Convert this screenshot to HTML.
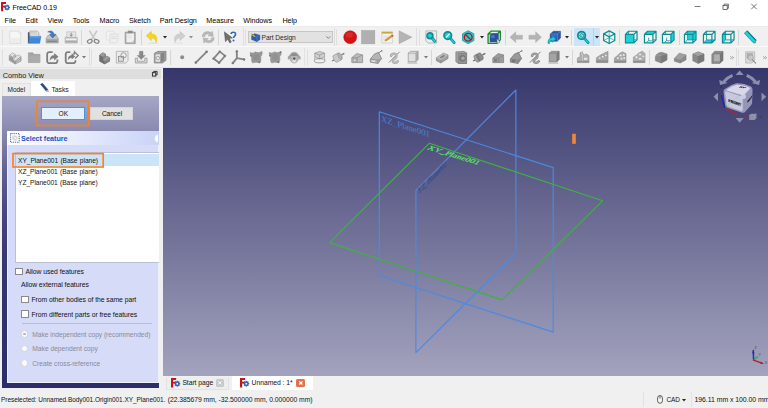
<!DOCTYPE html>
<html><head><meta charset="utf-8"><title>FreeCAD 0.19</title>
<style>
*{margin:0;padding:0;box-sizing:border-box}
html,body{width:768px;height:408px;overflow:hidden;background:#f0f0f0;font-family:"Liberation Sans",sans-serif;}
.a{position:absolute}
.t{position:absolute;white-space:nowrap;color:#111;font-size:7.2px;line-height:9px;letter-spacing:-0.05px}
.g{color:#8a8a96}
svg{position:absolute;overflow:visible}
</style></head><body>
<div class="a" style="left:0px;top:0px;width:768px;height:13px;background:#fff"></div>
<svg style="left:1.1px;top:2.15px" width="9.5" height="9.5" viewBox="0 0 19 19"><path d="M0 0h10v3.800H4.200v3.600h4.500v3.400H4.200v7.500H0z" fill="#c4141c"/><g fill="#3462b0"><circle cx="12.200" cy="11" r="4.400"/><rect x="10.900" y="5.300" width="2.600" height="11.400"/><rect x="6.500" y="9.700" width="11.400" height="2.600"/><rect x="10.900" y="5.300" width="2.600" height="11.400" transform="rotate(45 12.200 11)"/><rect x="10.900" y="5.300" width="2.600" height="11.400" transform="rotate(-45 12.200 11)"/></g><circle cx="12.200" cy="11" r="1.900" fill="#eef2fa"/></svg>
<div class="t" style="left:12.4px;top:2.8px;font-size:7.05px;color:#000">FreeCAD 0.19</div>
<svg style="left:0;top:0" width="768" height="13" viewBox="0 0 768 13"><g stroke="#2a2a2a" stroke-width="0.65" fill="none"><path d="M694.800 6.500h5.600"/><rect x="723" y="5.300" width="4.200" height="4.200"/><path d="M724.200 5.300v-1.200h4.200v4.200h-1.200"/><path d="M751.300 3.800l5.400 5.400M756.700 3.800l-5.400 5.400"/></g></svg>
<div class="a" style="left:0px;top:13px;width:768px;height:14px;background:#fff"></div>
<div class="t" style="left:4.6px;top:16.3px;font-size:7.2px;color:#000">File</div>
<div class="t" style="left:25.4px;top:16.3px;font-size:7.2px;color:#000">Edit</div>
<div class="t" style="left:47.6px;top:16.3px;font-size:7.2px;color:#000">View</div>
<div class="t" style="left:72.8px;top:16.3px;font-size:7.2px;color:#000">Tools</div>
<div class="t" style="left:99.6px;top:16.3px;font-size:7.2px;color:#000">Macro</div>
<div class="t" style="left:129px;top:16.3px;font-size:7.2px;color:#000">Sketch</div>
<div class="t" style="left:159.8px;top:16.3px;font-size:7.2px;color:#000">Part Design</div>
<div class="t" style="left:206.3px;top:16.3px;font-size:7.2px;color:#000">Measure</div>
<div class="t" style="left:243.2px;top:16.3px;font-size:7.2px;color:#000">Windows</div>
<div class="t" style="left:282.4px;top:16.3px;font-size:7.2px;color:#000">Help</div>
<div class="a" style="left:0px;top:25.8px;width:768px;height:42.2px;background:#f0f0f0"></div>
<div class="a" style="left:0px;top:25.6px;width:768px;height:0.6px;background:#ebebeb"></div>
<div class="a" style="left:0px;top:46.4px;width:768px;height:0.8px;background:#fafafa"></div>
<div class="a" style="left:0px;top:66.8px;width:768px;height:1.2px;background:#e4e4e4"></div>
<svg style="left:2.2px;top:29.5px" width="1" height="15" viewBox="0 0 1 15"><path d="M0.5 0v15" stroke="#b8b8b8" stroke-width="0.6" stroke-dasharray="0.8 0.8"/></svg>
<svg style="left:7.80px;top:29.80px" width="14.4" height="14.4" viewBox="0 0 16 16"><path d="M2 1.2h10.2L14 3v12H2z" fill="#f6f6f6" stroke="#d2d2d2" stroke-width=".7"/><path d="M12 1.2V3.2h2" fill="none" stroke="#d8d8d8" stroke-width=".6"/><path d="M3 9h10v5.4H3z" fill="#ececec"/></svg>
<svg style="left:26.50px;top:29.80px" width="14.4" height="14.4" viewBox="0 0 16 16"><path d="M3.200 1.300h8.300l1.700 1.700v6H3.200z" fill="#e6e6e6" stroke="#8c8c8c" stroke-width=".6"/><path d="M4 3h7M4 4.500h8" stroke="#b0b0b0" stroke-width=".6"/><path d="M1 2.500v12h1.800v-12z" fill="#4c5668"/><path d="M3 7h12.500l-1.400 7.800H1.400z" fill="#4088d8" stroke="#2c64a8" stroke-width=".5"/><path d="M3.400 7.700h11.500" stroke="#8cc4f4" stroke-width=".7"/></svg>
<svg style="left:45.30px;top:29.80px" width="14.4" height="14.4" viewBox="0 0 16 16"><path d="M1.2 9.5l2-3.5h9.6l2 3.5v5H1.2z" fill="#c4c4c4" stroke="#8c8c8c" stroke-width=".6"/><path d="M1.5 10h13v4.2h-13z" fill="#a6a6a6"/><path d="M2.5 12.6h11" stroke="#6e6e6e" stroke-width=".8"/><path d="M3 2.2c3-2 6.5-1 7 2.6h2.3L8.6 9 5 4.8h2.2C7 3 5 2 3 2.2z" fill="#3c7cc8" stroke="#24589c" stroke-width=".5"/></svg>
<svg style="left:63.60px;top:29.80px" width="14.4" height="14.4" viewBox="0 0 16 16"><path d="M3 2h10V8.500H3z" fill="#e6e6e6" stroke="#b0b0b0" stroke-width=".6"/><path d="M8 3v3.600M6.300 5.300L8 7l1.700-1.700" stroke="#8a8a8a" stroke-width="1.100" fill="none"/><path d="M1.200 8.200h13.600v6.300H1.200z" fill="#c8c8c8" stroke="#a0a0a0" stroke-width=".6"/><path d="M2 10.300h12" stroke="#f4f4f4" stroke-width="1.400"/><path d="M2 13h12" stroke="#9a9a9a" stroke-width=".9"/></svg>
<svg style="left:85.80px;top:29.80px" width="14.4" height="14.4" viewBox="0 0 16 16"><path d="M3.800 .8L9.800 10.500M12.200 .8L6.200 10.500" stroke="#c8c8c8" stroke-width="1.800" fill="none"/><ellipse cx="4.200" cy="12.600" rx="2.700" ry="2" fill="none" stroke="#848484" stroke-width="1.400" transform="rotate(-25 4.200 12.600)"/><ellipse cx="11.800" cy="12.600" rx="2.700" ry="2" fill="none" stroke="#848484" stroke-width="1.400" transform="rotate(25 11.800 12.600)"/></svg>
<svg style="left:104.80px;top:29.80px" width="14.4" height="14.4" viewBox="0 0 16 16"><path d="M1.500 1.500h8.500v9.500h-8.500z" fill="#f2f2f2" stroke="#dcdcdc" stroke-width=".7"/><path d="M5.500 4.500h9v7.500l-2.500 2.500h-6.500z" fill="#efefef" stroke="#d4d4d4" stroke-width=".7"/><path d="M7 7.500h6M7 9.500h6" stroke="#dadada" stroke-width=".9"/></svg>
<svg style="left:123.30px;top:29.80px" width="14.4" height="14.4" viewBox="0 0 16 16"><path d="M2.300 2.300h11.400v12.900H2.300z" fill="#acacac" stroke="#909090" stroke-width=".6"/><path d="M3.800 3.800h8.400v9.900H3.800z" fill="#f0f0f0"/><path d="M5.300 .8h5.400v2.800H5.300z" fill="#8e8e8e"/><path d="M5 6.500h5M5 8.500h5" stroke="#dcdcdc" stroke-width=".7"/><path d="M12.200 13.700h-2.700l2.700-2.700z" fill="#c4c4c4"/></svg>
<svg style="left:144.80px;top:29.80px" width="14.4" height="14.4" viewBox="0 0 16 16"><path d="M1.500 6.500L7 1.500v3c5 0 7.500 3.500 5.500 9.500-1-3.800-2.500-5-5.500-5v2.800z" fill="#f4d620" stroke="#e0b800" stroke-width=".5"/><ellipse cx="9" cy="14.600" rx="5" ry="1" fill="#dcdcdc" opacity=".7"/></svg>
<svg style="left:171.50px;top:29.80px" width="14.4" height="14.4" viewBox="0 0 16 16"><path d="M14.500 6.500L9 1.500v3c-5 0-7.500 3.500-5.500 9.500 1-3.800 2.500-5 5.500-5v2.800z" fill="#cfcfcf" stroke="#bdbdbd" stroke-width=".5"/><ellipse cx="7" cy="14.600" rx="5" ry="1" fill="#e4e4e4" opacity=".7"/></svg>
<svg style="left:200.50px;top:29.80px" width="14.4" height="14.4" viewBox="0 0 16 16"><path d="M1.300 7.500C1.300 3.500 4.500 1.500 8 1.800c1.300.1 2.300.5 3.200 1.100l1.600-1.700.9 6-6-.7 1.700-1.700C6.500 3.800 4.300 5 4.300 7.500z" fill="#b8b8b8" stroke="#a4a4a4" stroke-width=".4"/><path d="M14.700 8.500c0 4-3.200 6-6.700 5.700-1.300-.1-2.300-.5-3.200-1.100l-1.600 1.700-.9-6 6 .7-1.700 1.700c2.900 1 5.100-.2 5.100-2.700z" fill="#b8b8b8" stroke="#a4a4a4" stroke-width=".4"/></svg>
<svg style="left:222.80px;top:29.80px" width="14.4" height="14.4" viewBox="0 0 16 16"><path d="M1.500 2l1.200 11 2.600-2.600 2.200 4 1.800-1-2.200-4 3.400-.5z" fill="#707070" stroke="#4a4a4a" stroke-width=".5"/><path d="M9 4.500c0-2.500 5-2.800 5 .3 0 2-2.300 2-2.300 4.200" fill="none" stroke="#2c68b4" stroke-width="1.700"/><circle cx="11.700" cy="11.600" r="1.100" fill="#2c68b4"/></svg>
<svg style="left:342.60px;top:29.80px" width="14.4" height="14.4" viewBox="0 0 16 16"><circle cx="8" cy="8" r="7.200" fill="#d41414" stroke="#a80c0c" stroke-width=".5"/><ellipse cx="7" cy="5.500" rx="4" ry="3" fill="#e84040" opacity=".45"/></svg>
<svg style="left:360.80px;top:29.80px" width="14.4" height="14.4" viewBox="0 0 16 16"><rect x=".6" y=".6" width="14.800" height="14.800" fill="#b0b0b0" stroke="#9c9c9c" stroke-width=".5"/></svg>
<svg style="left:379.60px;top:29.80px" width="14.4" height="14.4" viewBox="0 0 16 16"><path d="M2 2h12v12.500H2z" fill="#f2f2ee" stroke="#c0c0b8" stroke-width=".6"/><path d="M2 2h12v2H2z" fill="#c8a838"/><path d="M3.500 7h6M3.500 9h4M3.500 11h3" stroke="#cfcfcf" stroke-width=".6"/><path d="M13.500 5.200l1.400 1.400-7 5-2.400.8 1-2.200z" fill="#e89a30" stroke="#a86410" stroke-width=".4"/><path d="M13.500 5.200l1.400 1.400-1.200.8-1.300-1.400z" fill="#d84848"/></svg>
<svg style="left:398.30px;top:29.80px" width="14.4" height="14.4" viewBox="0 0 16 16"><path d="M1.200 .8L15.500 8 1.200 15.200z" fill="#b4b4b4" stroke="#a2a2a2" stroke-width=".5"/></svg>
<svg style="left:423.80px;top:29.80px" width="14.4" height="14.4" viewBox="0 0 16 16"><path d="M2 1h12v13.500H4.500L2 12z" fill="#ececec" stroke="#8a8a8a" stroke-width=".6"/><path d="M8.5 8.3L12 12.5" stroke="#0c8c94" stroke-width="3.200" stroke-linecap="round"/><path d="M8.5 8.3L12 12.5" stroke="#1fd0d8" stroke-width="1.500" stroke-linecap="round"/><circle cx="6.6" cy="6.4" r="3.2" fill="#1fd0d8" stroke="#0c8c94" stroke-width="1.900"/></svg>
<svg style="left:442.30px;top:29.80px" width="14.4" height="14.4" viewBox="0 0 16 16"><path d="M8.9 8.7L13.5 14" stroke="#0c8c94" stroke-width="3.200" stroke-linecap="round"/><path d="M8.9 8.7L13.5 14" stroke="#1fd0d8" stroke-width="1.500" stroke-linecap="round"/><circle cx="6.4" cy="6.2" r="4.2" fill="#1fd0d8" stroke="#0c8c94" stroke-width="1.900"/><path d="M4.500 8.500L8.500 4" stroke="#e8f8f8" stroke-width="1.400"/></svg>
<svg style="left:460.80px;top:29.80px" width="14.4" height="14.4" viewBox="0 0 16 16"><path d="M8 .8l6.300 3.400v7.600L8 15.200 1.700 11.800V4.200z" fill="#1fd0d8" stroke="#0c8c94" stroke-width=".8"/><circle cx="8" cy="8" r="4.300" fill="none" stroke="#b81414" stroke-width="1.500"/><path d="M5 5l6 6" stroke="#b81414" stroke-width="1.500"/></svg>
<svg style="left:487.30px;top:29.80px" width="14.4" height="14.4" viewBox="0 0 16 16"><path d="M1.200 4.500L4.800 1.200h10v9.800l-3.600 3.800H1.200zM1.200 4.500h10.200v10.300M11.400 4.500l3.400-3.300" fill="#e8f0e8" stroke="#178c2e" stroke-width="1.500" stroke-linejoin="round"/><path d="M3 6.500L5.500 4h7.500v7L10.500 13.500H3z" fill="#28509c"/><ellipse cx="6.500" cy="7.500" rx="2.500" ry="2" fill="#5c8cd8" opacity=".6"/><path d="M10.800 9.800l3.700 4.200-1.900.2-.9 1.400z" fill="#f4f4f4" stroke="#555" stroke-width=".4"/></svg>
<svg style="left:509.30px;top:29.80px" width="14.4" height="14.4" viewBox="0 0 16 16"><path d="M1 8l6.500-6v3.800H15v4.400H7.500V14z" fill="#b4b4b4" stroke="#a4a4a4" stroke-width=".4"/></svg>
<svg style="left:527.80px;top:29.80px" width="14.4" height="14.4" viewBox="0 0 16 16"><path d="M15 8L8.500 2v3.800H1v4.400h7.500V14z" fill="#b4b4b4" stroke="#a4a4a4" stroke-width=".4"/></svg>
<svg style="left:546.80px;top:29.80px" width="14.4" height="14.4" viewBox="0 0 16 16"><path d="M3.500 4.500l3.500-3h8V9L11.500 12.500h-8z" fill="#2a58a8" stroke="#16387a" stroke-width=".5"/><path d="M3.500 4.500h8v8M11.500 4.500l3.500-3" fill="none" stroke="#6c9ce0" stroke-width=".7"/><path d="M4.500 5.500h6v3h-6z" fill="#4a7cd0" opacity=".5"/><path d="M1.200 15c-.6-4 1.200-6.200 4.600-6.200V6.600l4 3.500-4 3.500v-2c-1.900 0-3 1-3 3.400z" fill="#1fd0d8" stroke="#0c8c94" stroke-width=".7"/></svg>
<svg style="left:601.80px;top:29.80px" width="14.4" height="14.4" viewBox="0 0 16 16"><path d="M8 1l6.200 3.300v7.400L8 15 1.800 11.700V4.300z" fill="#f4fcfc" stroke="#0c8c94" stroke-width="1.400" stroke-linejoin="round"/><path d="M1.800 4.300L8 7.600l6.200-3.300M8 7.600V15" fill="none" stroke="#0c8c94" stroke-width="1.300"/><path d="M8 1v6M1.800 11.700L8 8.500l6.200 3.200" fill="none" stroke="#0c8c94" stroke-width=".7"/></svg>
<svg style="left:623.80px;top:29.80px" width="14.4" height="14.4" viewBox="0 0 16 16"><path d="M5.1 1.4V11.0H14.5M1.6 14.4L5.1 11.0" fill="none" stroke="#0c8c94" stroke-width=".9"/><path d="M1.6 4.8L11.0 4.8L11.0 14.4L1.6 14.4z" fill="#1fd0d8"/><path d="M1.6 4.8H11V14.4H1.6zM1.6 4.8L5.1 1.4H14.5V11.0L11 14.4M11 4.8L14.5 1.4" fill="none" stroke="#0c8c94" stroke-width="1.300" stroke-linejoin="round"/></svg>
<svg style="left:642.50px;top:29.80px" width="14.4" height="14.4" viewBox="0 0 16 16"><path d="M5.1 1.4V11.0H14.5M1.6 14.4L5.1 11.0" fill="none" stroke="#0c8c94" stroke-width=".9"/><path d="M1.6 4.8L11.0 4.8L11.0 14.4L1.6 14.4z" fill="#f4fcfc"/><path d="M1.6 4.8L11.0 4.8L14.5 1.4L5.1 1.4z" fill="#1fd0d8"/><path d="M1.6 4.8H11V14.4H1.6zM1.6 4.8L5.1 1.4H14.5V11.0L11 14.4M11 4.8L14.5 1.4" fill="none" stroke="#0c8c94" stroke-width="1.300" stroke-linejoin="round"/><path d="M6.300 12V8.500M6.300 12H9.800M6.300 12L4 13.500" fill="none" stroke="#0c8c94" stroke-width=".9" /></svg>
<svg style="left:661.30px;top:29.80px" width="14.4" height="14.4" viewBox="0 0 16 16"><path d="M5.1 1.4V11.0H14.5M1.6 14.4L5.1 11.0" fill="none" stroke="#0c8c94" stroke-width=".9"/><path d="M1.6 4.8L11.0 4.8L11.0 14.4L1.6 14.4z" fill="#f4fcfc"/><path d="M11.0 4.8L14.5 1.4L14.5 11.0L11.0 14.4z" fill="#1fd0d8"/><path d="M1.6 4.8H11V14.4H1.6zM1.6 4.8L5.1 1.4H14.5V11.0L11 14.4M11 4.8L14.5 1.4" fill="none" stroke="#0c8c94" stroke-width="1.300" stroke-linejoin="round"/><path d="M6.300 12V8.500M6.300 12H9.800M6.300 12L4 13.500" fill="none" stroke="#0c8c94" stroke-width=".9" /></svg>
<svg style="left:683.30px;top:29.80px" width="14.4" height="14.4" viewBox="0 0 16 16"><path d="M5.1 1.4L14.5 1.4L14.5 11.0L5.1 11.0z" fill="#1fd0d8"/><path d="M5.1 1.4V11.0H14.5M1.6 14.4L5.1 11.0" fill="none" stroke="#0c8c94" stroke-width=".9"/><path d="M1.6 4.8H11V14.4H1.6zM1.6 4.8L5.1 1.4H14.5V11.0L11 14.4M11 4.8L14.5 1.4" fill="none" stroke="#0c8c94" stroke-width="1.300" stroke-linejoin="round"/></svg>
<svg style="left:701.80px;top:29.80px" width="14.4" height="14.4" viewBox="0 0 16 16"><path d="M1.6 14.4L11.0 14.4L14.5 11.0L5.1 11.0z" fill="#1fd0d8"/><path d="M5.1 1.4V11.0H14.5M1.6 14.4L5.1 11.0" fill="none" stroke="#0c8c94" stroke-width=".9"/><path d="M1.6 4.8H11V14.4H1.6zM1.6 4.8L5.1 1.4H14.5V11.0L11 14.4M11 4.8L14.5 1.4" fill="none" stroke="#0c8c94" stroke-width="1.300" stroke-linejoin="round"/></svg>
<svg style="left:720.80px;top:29.80px" width="14.4" height="14.4" viewBox="0 0 16 16"><path d="M1.6 4.8L5.1 1.4L5.1 11.0L1.6 14.4z" fill="#1fd0d8"/><path d="M5.1 1.4V11.0H14.5M1.6 14.4L5.1 11.0" fill="none" stroke="#0c8c94" stroke-width=".9"/><path d="M1.6 4.8H11V14.4H1.6zM1.6 4.8L5.1 1.4H14.5V11.0L11 14.4M11 4.8L14.5 1.4" fill="none" stroke="#0c8c94" stroke-width="1.300" stroke-linejoin="round"/></svg>
<svg style="left:742.50px;top:29.80px" width="14.4" height="14.4" viewBox="0 0 16 16"><path d="M1.500 3.500L4.500 1l10 10.500-1 3-2-.3z" fill="#1fd0d8" stroke="#0c8c94" stroke-width=".8" stroke-linejoin="round"/><path d="M4.500 1l10 10.500" stroke="#0a7078" stroke-width="1.200"/></svg>
<div class="a" style="left:81.4px;top:29.5px;width:0.7px;height:15px;background:#d6d6d6"></div>
<div class="a" style="left:140.7px;top:29.5px;width:0.7px;height:15px;background:#d6d6d6"></div>
<div class="a" style="left:217.7px;top:29.5px;width:0.7px;height:15px;background:#d6d6d6"></div>
<div class="a" style="left:505.4px;top:29.5px;width:0.7px;height:15px;background:#d6d6d6"></div>
<div class="a" style="left:618.7px;top:29.5px;width:0.7px;height:15px;background:#d6d6d6"></div>
<div class="a" style="left:679.4000000000001px;top:29.5px;width:0.7px;height:15px;background:#d6d6d6"></div>
<div class="a" style="left:738.2px;top:29.5px;width:0.7px;height:15px;background:#d6d6d6"></div>
<svg style="left:163px;top:36.0px" width="4" height="2.4" viewBox="0 0 4 2.4"><path d="M0 0h4L2 2.4z" fill="#222"/></svg>
<svg style="left:188.5px;top:36.0px" width="4" height="2.4" viewBox="0 0 4 2.4"><path d="M0 0h4L2 2.4z" fill="#8c8c8c"/></svg>
<svg style="left:479.5px;top:36.0px" width="4" height="2.4" viewBox="0 0 4 2.4"><path d="M0 0h4L2 2.4z" fill="#222"/></svg>
<svg style="left:564.5px;top:36.0px" width="4" height="2.4" viewBox="0 0 4 2.4"><path d="M0 0h4L2 2.4z" fill="#222"/></svg>
<div class="a" style="left:242.6px;top:28px;width:0.7px;height:18px;background:#dedede"></div>
<svg style="left:244.5px;top:29.5px" width="1" height="15" viewBox="0 0 1 15"><path d="M0.5 0v15" stroke="#b8b8b8" stroke-width="0.6" stroke-dasharray="0.8 0.8"/></svg>
<div class="a" style="left:333.8px;top:28px;width:0.7px;height:18px;background:#dedede"></div>
<svg style="left:336.0px;top:29.5px" width="1" height="15" viewBox="0 0 1 15"><path d="M0.5 0v15" stroke="#b8b8b8" stroke-width="0.6" stroke-dasharray="0.8 0.8"/></svg>
<div class="a" style="left:416px;top:28px;width:0.7px;height:18px;background:#dedede"></div>
<svg style="left:418.5px;top:29.5px" width="1" height="15" viewBox="0 0 1 15"><path d="M0.5 0v15" stroke="#b8b8b8" stroke-width="0.6" stroke-dasharray="0.8 0.8"/></svg>
<div class="a" style="left:571.3000000000001px;top:29.5px;width:0.7px;height:15px;background:#d6d6d6"></div>
<div class="a" style="left:247.5px;top:30.5px;width:85.5px;height:12.6px;background:#e2e2e2;border:0.6px solid #c6c6c6"></div>
<svg style="left:250.5px;top:32.5px" width="9.5" height="9" viewBox="0 0 16 15"><path d="M1 4l5-3 9 2.500V11l-5 3.500L1 11z" fill="#2c5cac" stroke="#183c7c" stroke-width=".6"/><path d="M1 4l9 2.500V14.500M10 6.500l5-3" fill="none" stroke="#6c9ce0" stroke-width=".7"/><path d="M1.500 2l5 4" stroke="#e8c020" stroke-width="2"/><path d="M1 1.500l1.500 1.200" stroke="#403000" stroke-width="1.500"/></svg>
<div class="t" style="left:261.6px;top:32.9px;font-size:6.65px;color:#2a2a2a">Part Design</div>
<svg style="left:325.5px;top:35.6px" width="4.600" height="3" viewBox="0 0 4.600 3"><path d="M.3.400l2 2 2-2" fill="none" stroke="#444" stroke-width=".6"/></svg>
<div class="a" style="left:574px;top:27.9px;width:26.3px;height:18px;background:#cce4f7"></div>
<div class="a" style="left:592.6px;top:28px;width:0.5px;height:18px;background:#b4d4f0"></div>
<svg style="left:576.30px;top:29.80px" width="14.4" height="14.4" viewBox="0 0 16 16"><path d="M8.7 8.5L13.5 14" stroke="#0c8c94" stroke-width="3.200" stroke-linecap="round"/><path d="M8.7 8.5L13.5 14" stroke="#1fd0d8" stroke-width="1.500" stroke-linecap="round"/><circle cx="6.2" cy="6" r="4.2" fill="#7fd8dc" stroke="#0c8c94" stroke-width="1.900"/><path d="M4 6.500l2-2.500 3 1.500-1 3z" fill="none" stroke="#0c8c94" stroke-width=".8"/></svg>
<svg style="left:594.5px;top:36.0px" width="4" height="2.4" viewBox="0 0 4 2.4"><path d="M0 0h4L2 2.4z" fill="#222"/></svg>
<svg style="left:2.2px;top:49.8px" width="1" height="15" viewBox="0 0 1 15"><path d="M0.5 0v15" stroke="#b8b8b8" stroke-width="0.6" stroke-dasharray="0.8 0.8"/></svg>
<svg style="left:7.80px;top:50.10px" width="14.4" height="14.4" viewBox="0 0 16 16"><path d="M1.500 6L5 3.500 8 5v2.500l3-2 3.500 1.800v5L8 15.500 1.500 11.500z" fill="#c8c8c8" stroke="#808080" stroke-width=".7" stroke-linejoin="round"/><path d="M1.500 6L5 8v2.500L8 12.300V15.500L1.500 11.500z" fill="#a8a8a8"/><path d="M1.500 6L5 3.500 8 5 5 8zM5 10.500L8 8.500l3-3 3.500 1.800L8 12.300z" fill="#e0e0e0"/><path d="M1.500 6L5 8v2.500L8 12.300V15.500M5 8l3-3M8 12.300L14.500 7.300M5 10.500L8 8.500M1.500 8.500L5 10.500M8 14L14.500 9.500M1.500 10L8 14" fill="none" stroke="#808080" stroke-width=".6"/></svg>
<svg style="left:26.50px;top:50.10px" width="14.4" height="14.4" viewBox="0 0 16 16"><path d="M1.500 3h5l1.200 1.800h6.800V14h-13z" fill="#a4a4a4" stroke="#969696" stroke-width=".5"/><path d="M1.500 6h13v8h-13z" fill="#ababab"/></svg>
<svg style="left:45.30px;top:50.10px" width="14.4" height="14.4" viewBox="0 0 16 16"><path d="M8.500 2.300H4.800a2.400 2.400 0 0 0-2.400 2.400v7.600a2.400 2.400 0 0 0 2.400 2.400h6.600a2.400 2.400 0 0 0 2.400-2.400V10.500" fill="none" stroke="#7e7e7e" stroke-width="2"/><path d="M5.300 12.300c0-4.500 1.700-6.500 4.900-6.500V3.200l4.800 4.200-4.800 4.200V9.200C8 9.200 6.400 10 5.300 12.300z" fill="#7e7e7e"/></svg>
<svg style="left:63.60px;top:50.10px" width="14.4" height="14.4" viewBox="0 0 16 16"><path d="M7 2.300H4.300a2.400 2.400 0 0 0-2.400 2.400v7.600a2.400 2.400 0 0 0 2.400 2.400h6a2.400 2.400 0 0 0 2.400-2.400V11.500" fill="none" stroke="#7e7e7e" stroke-width="2"/><path d="M4.300 11.800c0-4.500 1.500-6 4.200-6V3.500l3.900 3.600-3.900 3.600V8.600C6.700 8.600 5.300 9.500 4.300 11.800z" fill="#7e7e7e"/><path d="M9.800 4.300h1.800V2l4.200 4.200-3.400 3.300" fill="none" stroke="#7e7e7e" stroke-width="1.400"/></svg>
<svg style="left:96.50px;top:50.10px" width="14.4" height="14.4" viewBox="0 0 16 16"><path d="M3 5.500L6.500 3 9.500 4.500V8L11.500 7 14 8.500v4L8.500 15.500 3 12.500z" fill="#848484" stroke="#585858" stroke-width=".6" stroke-linejoin="round"/><path d="M3 5.500L6.500 7.500v3.500L8.500 12.200V15.500L3 12.500z" fill="#6e6e6e"/><path d="M3 5.500L6.500 3 9.500 4.500 6.500 7.500zM6.500 11L9.500 8 11.500 7 14 8.500 8.500 12.200z" fill="#9c9c9c"/></svg>
<svg style="left:115.30px;top:50.10px" width="14.4" height="14.4" viewBox="0 0 16 16"><path d="M1.500 1.500h13v10.500l-2.500 2.500h-10.500z" fill="#ececec" stroke="#9a9a9a" stroke-width=".7"/><rect x="4" y="7" width="5.500" height="5.500" fill="#dcdcdc" stroke="#808080" stroke-width=".8"/><circle cx="9.500" cy="6" r="3" fill="none" stroke="#808080" stroke-width=".8"/></svg>
<svg style="left:133.80px;top:50.10px" width="14.4" height="14.4" viewBox="0 0 16 16"><path d="M1.500 9h2.500v3.500h8V9h2.500v5.500h-13z" fill="#d8d8d8" stroke="#8a8a8a" stroke-width=".7"/><path d="M6 1.500h4V6h2.500L8 10.500 3.500 6H6z" fill="#8a8a8a" stroke="#747474" stroke-width=".4"/></svg>
<svg style="left:152.80px;top:50.10px" width="14.4" height="14.4" viewBox="0 0 16 16"><path d="M1.500 3.500l4-2h9v10l-4 3h-9z" fill="#a0a0a0" stroke="#6e6e6e" stroke-width=".6"/><path d="M2.500 4.500h6v9h-6z" fill="#e4e4e4" stroke="#8a8a8a" stroke-width=".5"/><circle cx="5.500" cy="9" r="2" fill="none" stroke="#8a8a8a" stroke-width=".7"/><path d="M8.500 4.500l4-2.500v9.500l-4 2.500z" fill="#848484"/></svg>
<svg style="left:174.80px;top:50.10px" width="14.4" height="14.4" viewBox="0 0 16 16"><circle cx="8" cy="8" r="2.200" fill="#8c8c8c"/></svg>
<svg style="left:193.50px;top:50.10px" width="14.4" height="14.4" viewBox="0 0 16 16"><path d="M2 14L14 2" stroke="#868686" stroke-width="2.100" stroke-linecap="round"/><circle cx="2" cy="14" r="1.400" fill="#7c7c7c"/><circle cx="14" cy="2" r="1.400" fill="#7c7c7c"/></svg>
<svg style="left:212.30px;top:50.10px" width="14.4" height="14.4" viewBox="0 0 16 16"><path d="M8.700 1.800l5.800 4.700-6.600 7.700-6.200-4.700z" fill="none" stroke="#868686" stroke-width="2" stroke-linejoin="round"/><g fill="#7c7c7c"><circle cx="8.700" cy="1.800" r="1.300"/><circle cx="14.500" cy="6.500" r="1.300"/><circle cx="7.900" cy="14.200" r="1.300"/><circle cx="1.700" cy="9.500" r="1.300"/></g></svg>
<svg style="left:230.50px;top:50.10px" width="14.4" height="14.4" viewBox="0 0 16 16"><path d="M6.500 1.500V9M6.500 9L2 14.500M6.500 9l8 1.500" fill="none" stroke="#868686" stroke-width="2.100" stroke-linecap="round"/><g fill="#7c7c7c"><circle cx="6.500" cy="1.600" r="1.400"/><circle cx="2" cy="14.500" r="1.400"/><circle cx="14.500" cy="10.500" r="1.400"/></g></svg>
<svg style="left:249.30px;top:50.10px" width="14.4" height="14.4" viewBox="0 0 16 16"><path d="M1.500 2.500C3.500 4 5.500 3.500 7 2c2.500 1.500 5 1 7.500-.5.500 2.500 0 4.500-1.500 6 .500 2.500.500 5-1 7-2.500-1-5.500-1-8 0-1.500-2.500-1.500-4.500-1-6.500C1.500 6.500 1 4.500 1.500 2.500z" fill="#989898" stroke="#868686" stroke-width=".5"/><ellipse cx="8" cy="8" rx="3.500" ry="3.500" fill="#888" opacity=".55"/><circle cx="2.300" cy="6.500" r=".9" fill="#6e6e6e"/><circle cx="11.500" cy="13.500" r=".9" fill="#6e6e6e"/></svg>
<svg style="left:267.80px;top:50.10px" width="14.4" height="14.4" viewBox="0 0 16 16"><path d="M1.500 2.500C3.500 4 5.500 3.500 7 2c2.500 1.500 5 1 7.500-.5.500 2.500 0 4.500-1.500 6 .500 2.500.500 5-1 7-2.500-1-5.500-1-8 0-1.500-2.500-1.500-4.500-1-6.500C1.500 6.500 1 4.500 1.500 2.500z" fill="#9a9a9a" stroke="#868686" stroke-width=".5"/><ellipse cx="8" cy="8" rx="3.500" ry="3.500" fill="#8a8a8a" opacity=".55"/><circle cx="2.300" cy="6.500" r=".9" fill="#6e6e6e"/><circle cx="14" cy="2.500" r=".9" fill="#6e6e6e"/><circle cx="11.500" cy="13.500" r=".9" fill="#6e6e6e"/></svg>
<svg style="left:286.80px;top:50.10px" width="14.4" height="14.4" viewBox="0 0 16 16"><path d="M8 2.500c3 0 5 2 5 5s-1.500 7-5 7-5-4-5-7 2-5 5-5z" fill="#b8b8b8" stroke="#8a8a8a" stroke-width=".5"/><path d="M3.500 6C1.500 6 .5 8.500 1.500 10.500L4 8zM12.500 6c2 0 3 2.500 2 4.500L12 8z" fill="#a4a4a4" stroke="#868686" stroke-width=".4"/><path d="M4 6c1-3.500 7-3.500 8 0-1 .8-7 .8-8 0z" fill="#8c8c8c"/><circle cx="8" cy="9.500" r="1.300" fill="#4c4c4c"/><ellipse cx="8" cy="12.500" rx="2.200" ry="1.600" fill="#dcdcdc"/></svg>
<svg style="left:312.30px;top:50.10px" width="14.4" height="14.4" viewBox="0 0 16 16"><path d="M3 3.500L8.500 1.500 14 3.500v4L8.500 10 3 7.500z" fill="#d0d0d0" stroke="#808080" stroke-width=".6" stroke-linejoin="round"/><path d="M3 3.500L8.500 5.500 14 3.500M8.500 5.500V10" fill="none" stroke="#808080" stroke-width=".6"/><ellipse cx="8.500" cy="12" rx="6" ry="2.300" fill="none" stroke="#8a8a8a" stroke-width=".9"/><path d="M3 7.500v3.500M14 7.500v3.500" stroke="#8a8a8a" stroke-width=".6"/></svg>
<svg style="left:330.80px;top:50.10px" width="14.4" height="14.4" viewBox="0 0 16 16"><g transform="rotate(-28 8 8)"><path d="M0 8.500h3M12.500 7.500h3.500" stroke="#7c7c7c" stroke-width="1.400"/><path d="M4 3.800h5.500c3.600 0 3.600 8.400 0 8.400H4c-1.800 0-1.800-8.400 0-8.400z" fill="#cacaca" stroke="#8a8a8a" stroke-width=".6"/><ellipse cx="10" cy="8" rx="1.700" ry="4" fill="#b4b4b4" stroke="#8a8a8a" stroke-width=".5"/></g></svg>
<svg style="left:349.80px;top:50.10px" width="14.4" height="14.4" viewBox="0 0 16 16"><path d="M2 8.500L7.500 4l6.500 1.500V14H2z" fill="#bcbcbc" stroke="#7c7c7c" stroke-width=".7" stroke-linejoin="round"/><path d="M2 8.500h6V14M8 8.500L14 5.500" fill="none" stroke="#7c7c7c" stroke-width=".6"/><rect x="3.500" y="10" width="3.200" height="3" fill="#dcdcdc" stroke="#7c7c7c" stroke-width=".5"/></svg>
<svg style="left:368.50px;top:50.10px" width="14.4" height="14.4" viewBox="0 0 16 16"><path d="M1.500 10L6 4.500l4.500-2L14 9.500 10 15 1.500 13.500z" fill="#b4b4b4" stroke="#747474" stroke-width=".7" stroke-linejoin="round"/><path d="M1.500 10l8.500 1.500v3.500M10 11.500L14 9.500" fill="none" stroke="#747474" stroke-width=".6"/><path d="M10.500 3.500L14 .8" stroke="#747474" stroke-width=".9"/><circle cx="14.200" cy="1" r=".8" fill="#606060"/><rect x="3" y="11.200" width="4" height="2.200" fill="#d8d8d8"/></svg>
<svg style="left:386.80px;top:50.10px" width="14.4" height="14.4" viewBox="0 0 16 16"><path d="M2 14L14 2" stroke="#8a8a8a" stroke-width="1.100"/><path d="M4.500 6.500c1-3 5.500-3 6 0s-3.500 3-4 5.500 4 3 5.500.5" fill="none" stroke="#a4a4a4" stroke-width="2.800" stroke-linecap="round"/><path d="M4.500 6.500c1-3 5.500-3 6 0s-3.500 3-4 5.500 4 3 5.500.5" fill="none" stroke="#c4c4c4" stroke-width="1.200" stroke-linecap="round"/></svg>
<svg style="left:405.50px;top:50.10px" width="14.4" height="14.4" viewBox="0 0 16 16"><path d="M2.500 3.500L5 1.500h8.500v9L11 13H2.500z" fill="#e0e0e0" stroke="#8a8a8a" stroke-width=".7" stroke-linejoin="round"/><path d="M2.500 3.500H11V13M11 3.500l2.500-2" fill="none" stroke="#8a8a8a" stroke-width=".6"/><path d="M11 3.500l2.500-2v9L11 13z" fill="#a8a8a8"/><path d="M1.500 14.500h11" stroke="#a0a0a0" stroke-width=".9"/></svg>
<svg style="left:434.80px;top:50.10px" width="14.4" height="14.4" viewBox="0 0 16 16"><path d="M1.500 8.500L9.500 3.500 14.500 5.500v4L6.500 14.500 1.500 12z" fill="#a0a0a0" stroke="#747474" stroke-width=".6" stroke-linejoin="round"/><path d="M1.500 8.500l5 2.500 8-5.500-5-2z" fill="#b8b8b8"/><path d="M5 8.200L9.500 5.500l2 1L7 9.300z" fill="#7c7c7c"/><path d="M6.500 11v3.500" stroke="#747474" stroke-width=".5"/></svg>
<svg style="left:453.50px;top:50.10px" width="14.4" height="14.4" viewBox="0 0 16 16"><path d="M2 2l9-.5 3 1.500V15H5L2 13z" fill="#a0a0a0" stroke="#707070" stroke-width=".6" stroke-linejoin="round"/><path d="M5 4h9v11H5z" fill="#949494" stroke="#707070" stroke-width=".5"/><circle cx="9.500" cy="9.200" r="3.300" fill="#7c7c7c" stroke="#686868" stroke-width=".5"/><circle cx="10" cy="9.200" r="2" fill="#a8a8a8"/></svg>
<svg style="left:471.80px;top:50.10px" width="14.4" height="14.4" viewBox="0 0 16 16"><g transform="rotate(-28 8 8)"><path d="M0 8.500h3M12.500 7.500h3.500" stroke="#6c6c6c" stroke-width="1.400"/><path d="M4 3.800h5.500c3.600 0 3.600 8.400 0 8.400H4c-1.800 0-1.800-8.400 0-8.400z" fill="#a0a0a0" stroke="#747474" stroke-width=".6"/><path d="M5.500 3.800h2.500v8.400H5.500z" fill="#7c7c7c"/><ellipse cx="10" cy="8" rx="1.700" ry="4" fill="#909090" stroke="#747474" stroke-width=".5"/></g></svg>
<svg style="left:490.50px;top:50.10px" width="14.4" height="14.4" viewBox="0 0 16 16"><path d="M2 9L8 4l6 1.500V14H2z" fill="#9c9c9c" stroke="#747474" stroke-width=".7" stroke-linejoin="round"/><path d="M2 9h6.500V14M8.500 9L14 5.500" fill="none" stroke="#747474" stroke-width=".5"/><rect x="3.500" y="10.200" width="3.200" height="2.800" fill="#7c7c7c"/></svg>
<svg style="left:509.30px;top:50.10px" width="14.4" height="14.4" viewBox="0 0 16 16"><path d="M1.500 10L6 4.500l4.500-2L14 9.500 10 15 1.500 13.500z" fill="#9a9a9a" stroke="#6c6c6c" stroke-width=".7" stroke-linejoin="round"/><path d="M1.500 10l8.500 1.500v3.500M10 11.500L14 9.500" fill="none" stroke="#6c6c6c" stroke-width=".6"/><path d="M10.500 3.500L14 .8" stroke="#6c6c6c" stroke-width=".9"/><circle cx="14.200" cy="1" r=".8" fill="#585858"/><rect x="3" y="11.200" width="4" height="2.200" fill="#747474"/></svg>
<svg style="left:527.80px;top:50.10px" width="14.4" height="14.4" viewBox="0 0 16 16"><path d="M2 14L14 2" stroke="#7c7c7c" stroke-width="1.100"/><path d="M4.500 6.500c1-3 5.500-3 6 0s-3.500 3-4 5.500 4 3 5.500.5" fill="none" stroke="#8c8c8c" stroke-width="2.800" stroke-linecap="round"/><path d="M4.500 6.500c1-3 5.500-3 6 0s-3.500 3-4 5.500 4 3 5.500.5" fill="none" stroke="#a8a8a8" stroke-width="1.200" stroke-linecap="round"/></svg>
<svg style="left:546.80px;top:50.10px" width="14.4" height="14.4" viewBox="0 0 16 16"><path d="M2.500 3.500L5 1.500h8.500v9L11 13H2.500z" fill="#a4a4a4" stroke="#747474" stroke-width=".7" stroke-linejoin="round"/><path d="M2.500 3.500H11V13M11 3.500l2.500-2" fill="none" stroke="#747474" stroke-width=".6"/><path d="M11 3.500l2.500-2v9L11 13z" fill="#7c7c7c"/><path d="M1.500 14.500h11" stroke="#9a9a9a" stroke-width=".9"/></svg>
<svg style="left:575.80px;top:50.10px" width="14.4" height="14.4" viewBox="0 0 16 16"><path d="M1.500 9l3-1.500V3L7 2l1.500 3.500L12 4.500l2.500 2V14h-13z" fill="#b0b0b0" stroke="#808080" stroke-width=".5" stroke-linejoin="round"/><path d="M6 2.500l1.500 5.500V14" stroke="#d8d8d8" stroke-width=".8" fill="none"/><rect x="8.500" y="8" width="4.500" height="3.500" fill="#e4e4e4" stroke="#909090" stroke-width=".4"/><path d="M1.500 12h13v2h-13z" fill="#949494"/></svg>
<svg style="left:594.50px;top:50.10px" width="14.4" height="14.4" viewBox="0 0 16 16"><path d="M1.500 8.500L7 5l3-1.500 4.500-2V14h-13z" fill="#a8a8a8" stroke="#808080" stroke-width=".5" stroke-linejoin="round"/><path d="M1.500 11.500h13V14h-13z" fill="#8e8e8e"/><g fill="#f0f0f0" stroke="#8a8a8a" stroke-width=".3"><rect x="4" y="8" width="2.200" height="2"/><rect x="7.500" y="6.500" width="2.200" height="2"/><rect x="11" y="5" width="2.200" height="2"/></g></svg>
<svg style="left:613.30px;top:50.10px" width="14.4" height="14.4" viewBox="0 0 16 16"><path d="M1.500 9L5 6l2.500-2.500 3-1.500 4 2V14h-13z" fill="#a8a8a8" stroke="#808080" stroke-width=".5" stroke-linejoin="round"/><path d="M1.500 12h13v2h-13z" fill="#8e8e8e"/><g fill="#f0f0f0" stroke="#8a8a8a" stroke-width=".3"><circle cx="5.500" cy="9" r="1.300"/><circle cx="8.500" cy="6" r="1.300"/><circle cx="12" cy="5.500" r="1.300"/><circle cx="9.500" cy="9.500" r="1.300"/><circle cx="12.500" cy="9" r="1.300"/></g></svg>
<svg style="left:631.80px;top:50.10px" width="14.4" height="14.4" viewBox="0 0 16 16"><path d="M1.500 8l3.500-2.500L8 3l3.500-1.500 3 2.500V14h-13z" fill="#b0b0b0" stroke="#808080" stroke-width=".5" stroke-linejoin="round"/><path d="M1.500 12h13v2h-13z" fill="#8e8e8e"/><g fill="#e8e8e8" stroke="#8a8a8a" stroke-width=".3"><circle cx="5" cy="8" r="1.500"/><circle cx="9" cy="5" r="1.500"/><rect x="7" y="8.500" width="4" height="2.500"/><circle cx="12.500" cy="7" r="1.300"/></g></svg>
<svg style="left:653.80px;top:50.10px" width="14.4" height="14.4" viewBox="0 0 16 16"><path d="M1.500 7.500C2 4.500 5 3 8.500 2.500L14.500 4.500V11L8 14.500 1.500 12z" fill="#8c8c8c" stroke="#6c6c6c" stroke-width=".5" stroke-linejoin="round"/><path d="M1.500 7.500C3 5.500 6 5 8 6.500L14.500 4.500" fill="none" stroke="#b0b0b0" stroke-width=".6"/><path d="M8 6.500V14.500" stroke="#6c6c6c" stroke-width=".5"/><path d="M8 6.500l6.500-2V11L8 14.500z" fill="#7a7a7a"/></svg>
<svg style="left:672.50px;top:50.10px" width="14.4" height="14.4" viewBox="0 0 16 16"><path d="M1.500 9.500L7 3.500l7.500 2V11L8 14.500 1.500 12.500z" fill="#8c8c8c" stroke="#6c6c6c" stroke-width=".5" stroke-linejoin="round"/><path d="M1.500 9.500L8 11l6.500-5.500M8 11v3.500" fill="none" stroke="#6c6c6c" stroke-width=".5"/><path d="M1.500 9.500L7 3.500l7.500 2L8 11z" fill="#a0a0a0"/></svg>
<svg style="left:691.30px;top:50.10px" width="14.4" height="14.4" viewBox="0 0 16 16"><path d="M2 4.500L8 2l6.500 2.500V12L8 15 2 12z" fill="#8a8a8a" stroke="#666" stroke-width=".5" stroke-linejoin="round"/><path d="M2 4.500L8 7l6.500-2.500M8 7v8" fill="none" stroke="#666" stroke-width=".5"/><path d="M2 4.500L8 2l6.500 2.500L8 7z" fill="#a0a0a0"/><path d="M8 7l6.500-2.500V12L8 15z" fill="#787878"/></svg>
<svg style="left:709.80px;top:50.10px" width="14.4" height="14.4" viewBox="0 0 16 16"><path d="M2 5l3-3.500h9.500v10L11 15H2z" fill="#8e8e8e" stroke="#666" stroke-width=".5" stroke-linejoin="round"/><path d="M4 4.500h8V13H4z" fill="#b0b0b0" stroke="#707070" stroke-width=".4"/><path d="M5 5.500l1.500-2h6.500v8" fill="none" stroke="#707070" stroke-width=".4"/><path d="M11 5l3.500-3.500v10L11 15z" fill="#767676"/></svg>
<svg style="left:742.50px;top:50.10px" width="14.4" height="14.4" viewBox="0 0 16 16"><path d="M3 2h10v9l-3 3.500H3z" fill="#dcdcdc" stroke="#9a9a9a" stroke-width=".6"/><rect x="4.500" y="4" width="6" height="5" fill="#b4b4b4" stroke="#8a8a8a" stroke-width=".4"/><circle cx="8.500" cy="8.500" r="3" fill="#c8c8c8" stroke="#8a8a8a" stroke-width=".5"/><path d="M10.500 11l3.500 3.500" stroke="#8a8a8a" stroke-width="1.300" stroke-linecap="round"/></svg>
<div class="a" style="left:170.2px;top:49.8px;width:0.7px;height:15px;background:#d6d6d6"></div>
<div class="a" style="left:430.7px;top:49.8px;width:0.7px;height:15px;background:#d6d6d6"></div>
<div class="a" style="left:571.7px;top:49.8px;width:0.7px;height:15px;background:#d6d6d6"></div>
<div class="a" style="left:649.2px;top:49.8px;width:0.7px;height:15px;background:#d6d6d6"></div>
<svg style="left:81.7px;top:56.3px" width="4" height="2.4" viewBox="0 0 4 2.4"><path d="M0 0h4L2 2.4z" fill="#777"/></svg>
<svg style="left:423.7px;top:56.3px" width="4" height="2.4" viewBox="0 0 4 2.4"><path d="M0 0h4L2 2.4z" fill="#777"/></svg>
<svg style="left:565px;top:56.3px" width="4" height="2.4" viewBox="0 0 4 2.4"><path d="M0 0h4L2 2.4z" fill="#777"/></svg>
<div class="a" style="left:88.8px;top:48px;width:0.7px;height:18px;background:#dedede"></div>
<svg style="left:91.0px;top:49.8px" width="1" height="15" viewBox="0 0 1 15"><path d="M0.5 0v15" stroke="#b8b8b8" stroke-width="0.6" stroke-dasharray="0.8 0.8"/></svg>
<div class="a" style="left:303.6px;top:48px;width:0.7px;height:18px;background:#e2e2e2"></div>
<svg style="left:306.8px;top:49.8px" width="1" height="15" viewBox="0 0 1 15"><path d="M0.5 0v15" stroke="#b8b8b8" stroke-width="0.6" stroke-dasharray="0.8 0.8"/></svg>
<div class="a" style="left:735.8px;top:48px;width:0.7px;height:18px;background:#dedede"></div>
<svg style="left:738.3px;top:49.8px" width="1" height="15" viewBox="0 0 1 15"><path d="M0.5 0v15" stroke="#b8b8b8" stroke-width="0.6" stroke-dasharray="0.8 0.8"/></svg>
<svg style="left:729.800px;top:55.700px" width="4" height="3.400" viewBox="0 0 4 3.400"><path d="M.3.300l1.400 1.400L.3 3.100M2.200.300l1.400 1.400-1.400 1.400" fill="none" stroke="#666" stroke-width=".6"/></svg>
<svg style="left:762.600px;top:55.700px" width="4" height="3.400" viewBox="0 0 4 3.400"><path d="M.3.300l1.400 1.400L.3 3.100M2.200.300l1.400 1.400-1.400 1.400" fill="none" stroke="#666" stroke-width=".6"/></svg>
<div class="a" style="left:0px;top:68px;width:163px;height:322px;background:#f0f0f0"></div>
<div class="a" style="left:0px;top:68.5px;width:161.2px;height:10.2px;background:#dedede"></div>
<div class="t" style="left:2.8px;top:70.5px;font-size:7.350px;color:#1a1a1a">Combo View</div>
<svg style="left:152.100px;top:71.200px" width="5.500" height="5.500" viewBox="0 0 5.500 5.500"><g fill="none" stroke="#222" stroke-width=".9"><rect x=".4" y="1.700" width="3.400" height="3.400"/><path d="M1.700 1.700V.4h3.400v3.400H3.800"/></g></svg>
<div class="a" style="left:1.5px;top:82.5px;width:29.8px;height:13.5px;background:#ededed;border:1px solid #e2e2e2;border-bottom:none"></div>
<div class="t" style="left:7.5px;top:84.7px;font-size:6.550px;color:#1a1a1a">Model</div>
<div class="a" style="left:31.2px;top:81px;width:43.7px;height:15.2px;background:#fff"></div>
<svg style="left:39px;top:83px" width="10" height="9.500" viewBox="0 0 10 9.500"><path d="M1.500 1.200l2-1 5.500 6.500-2 1.300z" fill="#1f4f8c" stroke="#163a68" stroke-width=".4"/><path d="M7 8l2-1.300.6 2.200z" fill="#c8c8c8" stroke="#666" stroke-width=".3"/></svg>
<div class="t" style="left:51.4px;top:84.7px;font-size:6.850px;color:#1a1a1a">Tasks</div>
<div class="a" style="left:1.6px;top:96px;width:157.3px;height:291.5px;background:linear-gradient(#a6a6c6 0px,#8888ae 37px,#606092 76px,#48487e 115px,#38386f 158px,#2d2d67 291px)"></div>
<svg style="left:0;top:0" width="170" height="200"><g fill="none" stroke="#f08432" stroke-width="1.700"><rect x="36.900" y="101.300" width="51.600" height="24.200"/></g></svg>
<div class="a" style="left:40.6px;top:107.1px;width:44.4px;height:12.8px;background:#e3effb;border:1px solid #4a94e0"></div>
<div class="t" style="left:58.6px;top:109px;font-size:6.600px;color:#111">OK</div>
<div class="a" style="left:89.6px;top:107.1px;width:43.9px;height:12.8px;background:#e1e1e1;border:1px solid #d4d4d4"></div>
<div class="t" style="left:101.9px;top:109px;font-size:6.600px;color:#111">Cancel</div>
<div class="a" style="left:7.1px;top:131.2px;width:151.8px;height:13.4px;background:linear-gradient(90deg,#ffffff 0%,#e8ecfc 45%,#c9d3f8 100%)"></div>
<svg style="left:10.400px;top:133px" width="9.800" height="9.800" viewBox="0 0 10 10"><rect x=".6" y=".6" width="8.800" height="8.800" fill="none" stroke="#3c5c9c" stroke-width="1" stroke-dasharray="1 .9"/><path d="M2.500 3.200l2-.8 2.600.6.700 2.200-.6 2.200-2.500.6-2-.8-.5-2z" fill="#d4d4d4"/><path d="M3.500 3.500l3.500 3.500M6.800 3.600L3.600 6.800" stroke="#f4f4f4" stroke-width=".9"/></svg>
<div class="t" style="left:21px;top:134px;font-size:7.200px;font-weight:bold;color:#1c50c4">Select feature</div>
<svg style="left:154px;top:133.500px;overflow:hidden" width="4.400" height="9" viewBox="0 0 4.400 9"><circle cx="4.500" cy="4.500" r="4" fill="#fff" stroke="#c4c4d4" stroke-width=".4"/></svg>
<div class="a" style="left:7.1px;top:144.6px;width:151.8px;height:238.6px;background:#d6dcf7;border:0.500px solid #eef0fc;border-top:none"></div>
<div class="a" style="left:14.5px;top:152px;width:144.4px;height:110.6px;background:#fff;border:1px solid #bcc0d4;border-right:none"></div>
<div class="a" style="left:15.5px;top:154px;width:143.4px;height:11.6px;background:#cce4f7"></div>
<div class="t" style="left:18px;top:155.5px;font-size:6.650px;word-spacing:0.550px;color:#111">XY_Plane001 (Base plane)</div>
<div class="t" style="left:18px;top:167px;font-size:6.650px;word-spacing:0.550px;color:#111">XZ_Plane001 (Base plane)</div>
<div class="t" style="left:18px;top:178.4px;font-size:6.650px;word-spacing:0.550px;color:#111">YZ_Plane001 (Base plane)</div>
<svg style="left:0;top:0" width="170" height="200"><g fill="none" stroke="#f08432" stroke-width="1.700"><rect x="13" y="153.600" width="90.200" height="13.400"/></g></svg>
<div class="a" style="left:15.2px;top:267.6px;width:7.8px;height:7.8px;background:#fff;border:1px solid #8a8a8a"></div>
<div class="t" style="left:25.4px;top:267.3px;font-size:6.820px;color:#111">Allow used features</div>
<div class="t" style="left:21px;top:280px;font-size:6.820px;color:#111">Allow external features</div>
<div class="a" style="left:20.8px;top:295.6px;width:7.8px;height:7.8px;background:#fff;border:1px solid #8a8a8a"></div>
<div class="t" style="left:31.5px;top:295.4px;font-size:6.820px;color:#111">From other bodies of the same part</div>
<div class="a" style="left:20.8px;top:310px;width:7.8px;height:7.8px;background:#fff;border:1px solid #8a8a8a"></div>
<div class="t" style="left:31.5px;top:309.8px;font-size:6.820px;color:#111">From different parts or free features</div>
<div class="a" style="left:21.5px;top:323px;width:130px;height:0.6px;background:#b8bcd0"></div>
<div class="a" style="left:20.9px;top:330.0px;width:7.6px;height:7.6px;background:#fafafd;border:1px solid #d4d4e0;border-radius:50%"><div class="a" style="left:1.500px;top:1.500px;width:2.600px;height:2.600px;border-radius:50%;background:#b4b4bc"></div></div>
<div class="t" style="left:32.3px;top:330px;font-size:6.680px;color:#8a8a9a">Make independent copy (recommended)</div>
<div class="a" style="left:20.9px;top:344.5px;width:7.6px;height:7.6px;background:#fafafd;border:1px solid #d4d4e0;border-radius:50%"></div>
<div class="t" style="left:32.3px;top:344.4px;font-size:6.750px;color:#8a8a9a">Make dependent copy</div>
<div class="a" style="left:20.9px;top:359.0px;width:7.6px;height:7.6px;background:#fafafd;border:1px solid #d4d4e0;border-radius:50%"></div>
<div class="t" style="left:32.3px;top:358.9px;font-size:6.750px;color:#8a8a9a">Create cross-reference</div>
<div class="a" style="left:163.1px;top:67.6px;width:604.9px;height:308.7px;background:linear-gradient(#36366b 0%,#a3a3be 100%);overflow:hidden"><svg style="left:-163.100px;top:-67.600px" width="768" height="408" viewBox="0 0 768 408"><g fill="none" stroke-width="1.150" stroke-linejoin="round"><path d="M379.300 111.800L553.200 167.600V332.100L379.300 275.500z" stroke="#4a8ae2"/><path d="M515.900 90L415.900 190.400V352.600L515.900 253.300z" stroke="#4a8ae2"/><path d="M429.300 143.300L602.600 200.800L502.100 299.900L329.600 242.600z" stroke="#3cb43c"/></g><g style="font-family:'Liberation Serif',serif;font-size:10px"><text transform="matrix(0.883,0.284,0,0.88,381,121.500)" fill="#4a82d4">XZ_Plane001</text><text transform="matrix(0.900,0.281,-0.516,0.516,426.800,149)" fill="#5cf05c" stroke="#5cf05c" stroke-width=".2">XY_Plane001</text><text transform="matrix(0.513,-0.515,0,0.843,418,194.500)" fill="#304c8c" stroke="#304c8c" stroke-width=".25">YZ_Plane001</text></g><rect x="572.200" y="133.800" width="3.600" height="10" fill="#f58634"/><g stroke-linecap="round"><path d="M753.600 360.200L753.300 350.500" stroke="#2a2ab4" stroke-width="1.500"/><path d="M753.300 349.600l-1.200 4h2.400z" fill="#2a2ab4"/><path d="M753.600 360.200L757.400 356.700" stroke="#1cb43c" stroke-width="1.300"/><path d="M753.600 360.200L762.500 363.400" stroke="#b42020" stroke-width="1.300"/><path d="M764 363.900l-4-.3.800-2z" fill="#b42020"/></g><g style="font-family:'Liberation Sans';font-size:3.600px" fill="#444"><text x="754.500" y="349.300">Z</text><text x="758.600" y="355.700">Y</text><text x="764.800" y="364.400">X</text></g><g transform="translate(708,66) scale(0.147)"><g fill="#9c9cb8" opacity=".85"><path d="M215 30L188 62H243z"/><path d="M215 386L188 354H243z"/><path d="M38 210L68 180V240z"/><path d="M396 210L364 180V240z"/><path d="M167 64A152 152 0 0 0 106 108" fill="none" stroke="#9c9cb8" stroke-width="20"/><path d="M82 130L76 96 134 116z"/><path d="M263 64A152 152 0 0 1 324 108" fill="none" stroke="#9c9cb8" stroke-width="20"/><path d="M348 130L354 96 296 116z"/></g><path d="M112 158Q150 128 192 118Q240 114 292 140Q304 148 303 165L300 250Q298 262 288 272L250 314Q240 322 226 316L130 284Q118 278 116 264L106 176Q104 164 112 158z" fill="#9898bc"/><path d="M122 172L230 208Q236 212 236 220L236 300Q234 310 224 306L136 276Q128 272 127 262L116 182Q116 170 122 172z" fill="#c8c8de"/><path d="M128 160Q160 136 196 128Q240 126 282 146Q290 152 282 158L246 196Q238 202 228 198L130 168Q122 164 128 160z" fill="#d8d8ea"/><path d="M252 214L288 172Q296 166 296 176L292 246Q292 256 286 262L254 300Q246 306 246 296L246 226Q246 218 252 214z" fill="#9494b8"/><circle cx="241" cy="207" r="17" fill="#d2d2e2" opacity=".9"/><g style="font-family:'Liberation Sans';font-weight:bold" fill="#0a0a0a" stroke="#0a0a0a" stroke-width="1.500" opacity=".99"><text transform="matrix(0.95,0.32,0,1,140,247)" font-size="26">FRONT</text><text transform="matrix(1,0.12,-0.9,0.45,205,146)" font-size="22">TOP</text><text transform="matrix(0.62,-0.72,0,1,268,250)" font-size="17">RIGHT</text></g><path d="M114 286L90 198" stroke="#1818d8" stroke-width="7"/><path d="M114 288L204 330" stroke="#c81c2c" stroke-width="7"/><path d="M116 284L214 200" stroke="#30d850" stroke-width="3" stroke-dasharray="8 6"/><text x="84" y="150" font-size="24" fill="#1818d8" style="font-family:'Liberation Sans';font-weight:bold">Z</text><text x="252" y="356" font-size="24" fill="#b81c3c" style="font-family:'Liberation Sans';font-weight:bold">X</text><path d="M280 334L296 324H330V356L316 368H280z" fill="#8e8ea8"/><path d="M280 334H316V368M316 334L330 324" fill="none" stroke="#a8a8c0" stroke-width="2"/><path d="M346 342H372L359 354z" fill="#3c3c5c"/></g></svg></div>
<div class="a" style="left:163px;top:376px;width:605px;height:14px;background:#f0f0f0"></div>
<div class="a" style="left:166px;top:376.6px;width:62.5px;height:13.4px;background:#eeeeee;border:1px solid #e2e2e2;border-top:none"></div>
<svg style="left:170.8px;top:377.9px" width="9.8" height="9.8" viewBox="0 0 19 19"><path d="M0 0h10v3.800H4.200v3.600h4.500v3.400H4.200v7.500H0z" fill="#c4141c"/><g fill="#3462b0"><circle cx="12.200" cy="11" r="4.400"/><rect x="10.900" y="5.300" width="2.600" height="11.400"/><rect x="6.500" y="9.700" width="11.400" height="2.600"/><rect x="10.900" y="5.300" width="2.600" height="11.400" transform="rotate(45 12.200 11)"/><rect x="10.900" y="5.300" width="2.600" height="11.400" transform="rotate(-45 12.200 11)"/></g><circle cx="12.200" cy="11" r="1.900" fill="#eef2fa"/></svg>
<div class="t" style="left:182.4px;top:378.1px;font-size:6.780px;color:#111">Start page</div>
<div class="a" style="left:216px;top:378.5px;width:8.2px;height:8.2px;background:#c9c9c9;border-radius:1.500px"></div>
<svg style="left:216.300px;top:378.800px" width="7.600" height="7.600" viewBox="0 0 7.600 7.600"><path d="M2.200 2.200l3.200 3.200M5.400 2.200L2.200 5.400" stroke="#fff" stroke-width="1"/></svg>
<div class="a" style="left:232px;top:376px;width:80.8px;height:14px;background:#fff"></div>
<svg style="left:239.8px;top:377.9px" width="9.8" height="9.8" viewBox="0 0 19 19"><path d="M0 0h10v3.800H4.200v3.600h4.500v3.400H4.200v7.500H0z" fill="#c4141c"/><g fill="#3462b0"><circle cx="12.200" cy="11" r="4.400"/><rect x="10.900" y="5.300" width="2.600" height="11.400"/><rect x="6.500" y="9.700" width="11.400" height="2.600"/><rect x="10.900" y="5.300" width="2.600" height="11.400" transform="rotate(45 12.200 11)"/><rect x="10.900" y="5.300" width="2.600" height="11.400" transform="rotate(-45 12.200 11)"/></g><circle cx="12.200" cy="11" r="1.900" fill="#eef2fa"/></svg>
<div class="t" style="left:251.6px;top:378.1px;font-size:6.800px;color:#111">Unnamed : 1*</div>
<div class="a" style="left:296.4px;top:378.5px;width:8.4px;height:8.4px;background:#e2724a;border-radius:1.500px"></div>
<svg style="left:296.700px;top:378.800px" width="7.800" height="7.800" viewBox="0 0 7.800 7.800"><path d="M2.300 2.300l3.200 3.200M5.500 2.300L2.300 5.500" stroke="#fff" stroke-width="1.100"/></svg>
<div class="a" style="left:0px;top:390px;width:768px;height:18px;background:#f0f0f0"></div>
<div class="t" style="left:1px;top:395.4px;font-size:6.500px;color:#111">Preselected: Unnamed.Body001.Origin001.XY_Plane001.</div>
<div class="t" style="left:167.7px;top:395.4px;font-size:6.820px;color:#111">(22.385679 mm, -32.500000 mm, 0.000000 mm)</div>
<div class="a" style="left:643.3px;top:392px;width:0.6px;height:15px;background:#e2e2e2"></div>
<div class="a" style="left:691px;top:392px;width:0.6px;height:15px;background:#e2e2e2"></div>
<svg style="left:657.400px;top:395.200px" width="6" height="8.800" viewBox="0 0 5.400 8"><rect x=".5" y=".5" width="4.400" height="7" rx="2.200" fill="#f8f8f8" stroke="#333" stroke-width=".7"/><path d="M2.700 1v2.300" stroke="#333" stroke-width=".7"/></svg>
<div class="t" style="left:666.5px;top:395.4px;font-size:6.450px;color:#111">CAD</div>
<svg style="left:682.3px;top:398.6px" width="4" height="2.4" viewBox="0 0 4 2.4"><path d="M0 0h4L2 2.4z" fill="#222"/></svg>
<div class="t" style="left:694.5px;top:395.4px;font-size:6.920px;color:#111">196.11 mm x 100.00 mm</div>
</body></html>
